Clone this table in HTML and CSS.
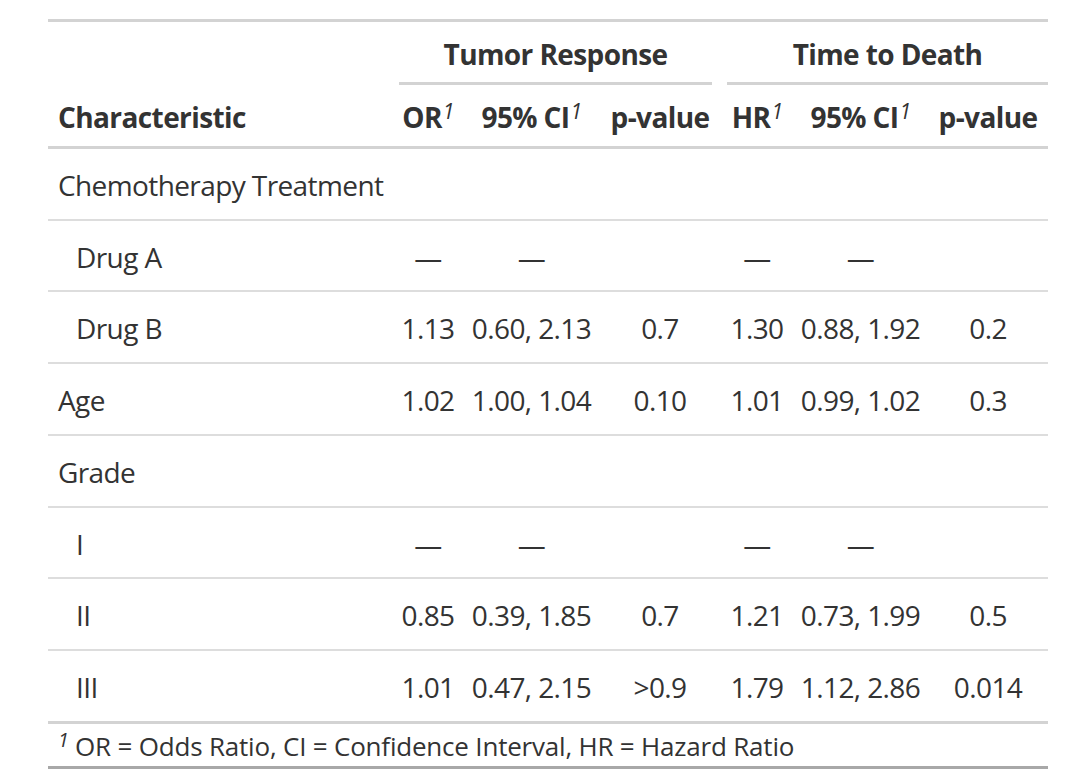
FILE: index.html
```html
<!DOCTYPE html>
<html lang="en">
<head>
<meta charset="utf-8">
<title>Regression table</title>
<link rel="stylesheet" href="styles.css">
</head>
<body>
<div class="page">
<table class="gt">
  <colgroup>
    <col class="c-char">
    <col class="c-est">
    <col class="c-ci">
    <col class="c-p">
    <col class="c-est">
    <col class="c-ci">
    <col class="c-p2">
  </colgroup>
  <thead>
    <tr class="spanner-row">
      <th class="label-char" rowspan="2">Characteristic</th>
      <th class="spanner" colspan="3"><div class="span-line span-left">Tumor Response</div></th>
      <th class="spanner" colspan="3"><div class="span-line span-right">Time to Death</div></th>
    </tr>
    <tr class="label-row">
      <th class="label">OR<span class="mark">1</span></th>
      <th class="label">95% CI<span class="mark">1</span></th>
      <th class="label">p-value</th>
      <th class="label">HR<span class="mark">1</span></th>
      <th class="label">95% CI<span class="mark">1</span></th>
      <th class="label">p-value</th>
    </tr>
  </thead>
  <tbody>
    <tr>
      <td class="stub">Chemotherapy Treatment</td>
      <td></td><td></td><td></td><td></td><td></td><td></td>
    </tr>
    <tr>
      <td class="stub indent">Drug A</td>
      <td>—</td><td>—</td><td></td><td>—</td><td>—</td><td></td>
    </tr>
    <tr>
      <td class="stub indent">Drug B</td>
      <td>1.13</td><td>0.60, 2.13</td><td>0.7</td><td>1.30</td><td>0.88, 1.92</td><td>0.2</td>
    </tr>
    <tr>
      <td class="stub">Age</td>
      <td>1.02</td><td>1.00, 1.04</td><td>0.10</td><td>1.01</td><td>0.99, 1.02</td><td>0.3</td>
    </tr>
    <tr>
      <td class="stub">Grade</td>
      <td></td><td></td><td></td><td></td><td></td><td></td>
    </tr>
    <tr>
      <td class="stub indent">I</td>
      <td>—</td><td>—</td><td></td><td>—</td><td>—</td><td></td>
    </tr>
    <tr>
      <td class="stub indent">II</td>
      <td>0.85</td><td>0.39, 1.85</td><td>0.7</td><td>1.21</td><td>0.73, 1.99</td><td>0.5</td>
    </tr>
    <tr class="last">
      <td class="stub indent">III</td>
      <td>1.01</td><td>0.47, 2.15</td><td>&gt;0.9</td><td>1.79</td><td>1.12, 2.86</td><td>0.014</td>
    </tr>
  </tbody>
  <tfoot>
    <tr>
      <td class="footnote" colspan="7"><span class="fmark">1</span> OR = Odds Ratio, CI = Confidence Interval, HR = Hazard Ratio</td>
    </tr>
  </tfoot>
</table>
</div>
</body>
</html>
```

FILE: styles.css
```css
html, body {
  margin: 0;
  padding: 0;
  background: #ffffff;
}

.page {
  padding: 19px 0 0 48px;
}

.gt {
  width: 1000px;
  table-layout: fixed;
  border-collapse: collapse;
  font-family: "Open Sans", "Noto Sans", "Liberation Sans", sans-serif;
  font-size: 28px;
  letter-spacing: -0.6px;
  color: #333333;
  border-top: 3px solid #D3D3D3;
  border-bottom: 3px solid #A8A8A8;
}

.c-char { width: 344px; }
.c-est { width: 72px; }
.c-ci { width: 135px; }
.c-p { width: 122px; }
.c-p2 { width: 120px; }

th {
  font-weight: bold;
  padding: 0;
}

.spanner {
  padding: 12px 0 0;
  vertical-align: bottom;
}

.span-line {
  line-height: 40px;
  padding-bottom: 8px;
  border-bottom: 3px solid #D3D3D3;
  text-align: center;
}

.span-left {
  margin: 0 9px 0 7px;
}

.span-right {
  margin: 0 0 0 6px;
}

.label-row th,
.label-char {
  border-bottom: 3px solid #D3D3D3;
}

.label {
  padding: 12px 0 9px;
  line-height: 40px;
  text-align: center;
  white-space: nowrap;
}

.label-char {
  text-align: left;
  vertical-align: bottom;
  padding: 0 10px 9px;
  line-height: 40px;
}

.mark {
  font-style: italic;
  font-weight: normal;
  font-size: 75%;
  line-height: 0;
  vertical-align: 0.45em;
  margin-left: 1px;
}

td {
  padding: 17px 0 13px;
  line-height: 39.7px;
  text-align: center;
  border-bottom: 2px solid #DDDDDD;
  white-space: nowrap;
}

td.stub {
  text-align: left;
  padding-left: 10px;
}

td.indent {
  padding-left: 28px;
}

tr.last td {
  border-bottom: 3px solid #D3D3D3;
}

.footnote {
  text-align: left;
  font-size: 26px;
  letter-spacing: -0.2px;
  line-height: 38px;
  padding: 3px 10px 1px;
  border-bottom: none;
}

.fmark {
  font-style: italic;
  font-size: 75%;
  line-height: 0;
  vertical-align: 0.45em;
}
```
